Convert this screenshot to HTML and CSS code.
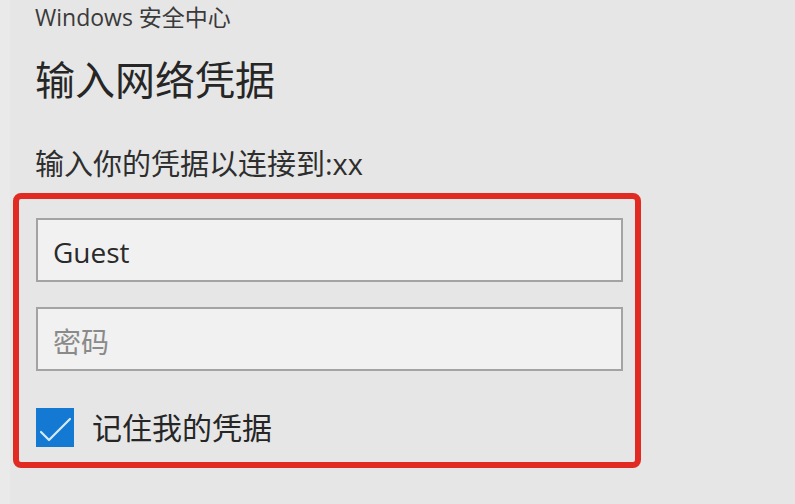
FILE: index.html
```html
<!DOCTYPE html>
<html lang="zh-CN">
<head>
<meta charset="utf-8">
<title>Windows 安全中心</title>
<link rel="stylesheet" href="styles.css">
</head>
<body>
<div class="page">
  <div class="app-name">Windows 安全中心</div>
  <div class="title">输入网络凭据</div>
  <div class="subtitle">输入你的凭据以连接到:xx</div>
  <div class="highlight">
    <div class="field"><span class="value">Guest</span></div>
    <div class="field"><span class="placeholder">密码</span></div>
    <div class="remember">
      <span class="checkbox">
        <svg width="38" height="39" viewBox="0 0 38 39"><path d="M5 24 L13 32 L34 11" fill="none" stroke="#d6ebfa" stroke-width="2.2" stroke-linecap="round" stroke-linejoin="round"/></svg>
      </span>
      <span class="remember-label">记住我的凭据</span>
    </div>
  </div>
</div>
</body>
</html>
```

FILE: styles.css
```css
html, body {
  margin: 0;
  padding: 0;
  background: #e6e6e6;
}
body {
  width: 795px;
  height: 504px;
  overflow: hidden;
  font-family: "Open Sans", "Noto Sans CJK SC", sans-serif;
  color: #262626;
}
.page {
  height: 504px;
  border-left: 10px solid #eaeaea;
  box-sizing: border-box;
  padding-left: 25px;
}
.app-name {
  font-size: 23px;
  line-height: 34px;
  margin-top: 0;
  color: #3a3a3a;
}
.title {
  font-size: 40px;
  line-height: 56px;
  margin-top: 18px;
  color: #262626;
}
.subtitle {
  font-size: 29px;
  line-height: 40px;
  margin-top: 36px;
  color: #2e2e2e;
}
.highlight {
  margin-top: 9px;
  margin-left: -22px;
  width: 628px;
  box-sizing: border-box;
  border: 6px solid #e12a22;
  border-radius: 8px;
  padding: 19px 12px 15px 17px;
  display: flex;
  flex-direction: column;
}
.field {
  height: 64px;
  box-sizing: border-box;
  border: 2px solid #a3a3a3;
  background: #f1f1f1;
  display: flex;
  align-items: center;
  padding-left: 15px;
  padding-top: 4px;
  font-size: 28px;
}
.field + .field {
  margin-top: 25px;
}
.value {
  color: #2a2a2a;
}
.placeholder {
  color: #8a8a8a;
}
.remember {
  margin-top: 37px;
  display: flex;
  align-items: center;
  gap: 18px;
}
.checkbox {
  width: 38px;
  height: 39px;
  background: #1479d2;
  display: block;
}
.checkbox svg {
  display: block;
}
.remember-label {
  font-size: 30px;
  line-height: 39px;
  color: #262626;
}
```
